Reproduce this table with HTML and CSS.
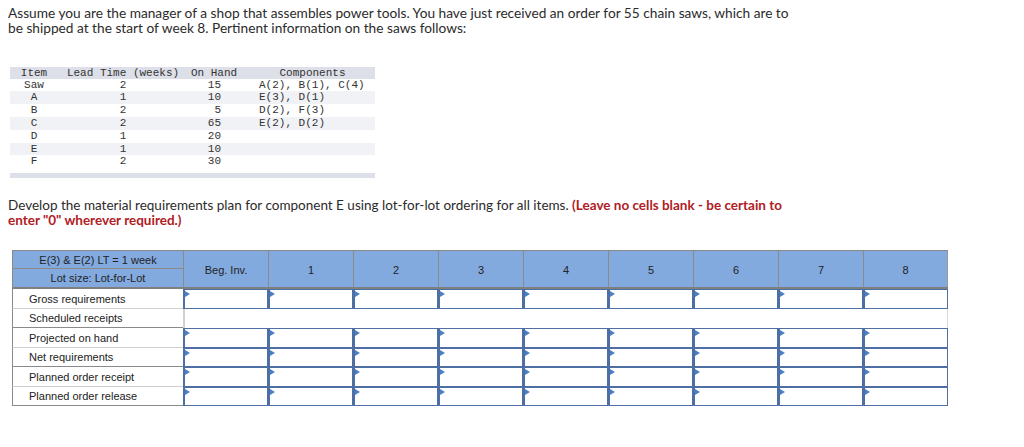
FILE: index.html
```html
<!DOCTYPE html>
<html>
<head>
<meta charset="utf-8">
<link rel="stylesheet" href="styles.css">
</head>
<body>
<p class="intro">Assume you are the manager of a shop that assembles power tools. You have just received an order for 55 chain saws, which are to be shipped at the start of week 8. Pertinent information on the saws follows:</p>

<table class="data">
  <thead>
    <tr><th class="c-item">Item</th><th class="c-lead">Lead Time (weeks)</th><th class="c-hand">On Hand</th><th class="c-comp">Components</th></tr>
  </thead>
  <tbody>
    <tr class="first"><td class="c-item">Saw</td><td class="c-lead">2</td><td class="c-hand">15</td><td class="c-comp">A(2), B(1), C(4)</td></tr>
    <tr class="alt"><td class="c-item">A</td><td class="c-lead">1</td><td class="c-hand">10</td><td class="c-comp">E(3), D(1)</td></tr>
    <tr><td class="c-item">B</td><td class="c-lead">2</td><td class="c-hand">5</td><td class="c-comp">D(2), F(3)</td></tr>
    <tr class="alt"><td class="c-item">C</td><td class="c-lead">2</td><td class="c-hand">65</td><td class="c-comp">E(2), D(2)</td></tr>
    <tr><td class="c-item">D</td><td class="c-lead">1</td><td class="c-hand">20</td><td class="c-comp"></td></tr>
    <tr class="alt"><td class="c-item">E</td><td class="c-lead">1</td><td class="c-hand">10</td><td class="c-comp"></td></tr>
    <tr><td class="c-item">F</td><td class="c-lead">2</td><td class="c-hand">30</td><td class="c-comp"></td></tr>
    <tr class="spacer"><td colspan="4"></td></tr>
    <tr class="bar"><td colspan="4"></td></tr>
  </tbody>
</table>

<p class="task">Develop the material requirements plan for component E using lot-for-lot ordering for all items. <strong class="warn">(Leave no cells blank - be certain to enter "0" wherever required.)</strong></p>

<div class="mrp">
  <div class="hdr">
    <div class="hdr-left">
      <div class="hl-top">E(3) &amp; E(2) LT = 1 week</div>
      <div class="hl-bot">Lot size: Lot-for-Lot</div>
    </div>
    <div class="hc">Beg. Inv.</div>
    <div class="hc">1</div>
    <div class="hc">2</div>
    <div class="hc">3</div>
    <div class="hc">4</div>
    <div class="hc">5</div>
    <div class="hc">6</div>
    <div class="hc">7</div>
    <div class="hc last">8</div>
  </div>

  <div class="row">
    <div class="lbl light">Gross requirements</div>
    <div class="in"></div><div class="in"></div><div class="in"></div><div class="in"></div><div class="in"></div><div class="in"></div><div class="in"></div><div class="in"></div><div class="in"></div>
  </div>
  <div class="row">
    <div class="lbl">Scheduled receipts</div>
    <div class="blank"></div>
  </div>
  <div class="row">
    <div class="lbl light">Projected on hand</div>
    <div class="in"></div><div class="in"></div><div class="in"></div><div class="in"></div><div class="in"></div><div class="in"></div><div class="in"></div><div class="in"></div><div class="in"></div>
  </div>
  <div class="row">
    <div class="lbl">Net requirements</div>
    <div class="in"></div><div class="in"></div><div class="in"></div><div class="in"></div><div class="in"></div><div class="in"></div><div class="in"></div><div class="in"></div><div class="in"></div>
  </div>
  <div class="row">
    <div class="lbl light">Planned order receipt</div>
    <div class="in"></div><div class="in"></div><div class="in"></div><div class="in"></div><div class="in"></div><div class="in"></div><div class="in"></div><div class="in"></div><div class="in"></div>
  </div>
  <div class="row">
    <div class="lbl">Planned order release</div>
    <div class="in"></div><div class="in"></div><div class="in"></div><div class="in"></div><div class="in"></div><div class="in"></div><div class="in"></div><div class="in"></div><div class="in"></div>
  </div>
</div>
</body>
</html>
```

FILE: styles.css
```css
* { box-sizing: border-box; }

body {
  margin: 0;
  padding: 5px 8px 0 8px;
  background: #fff;
  color: #222;
  font-family: "Lato", "Open Sans", sans-serif;
}

.intro {
  margin: 0;
  width: 795px;
  font-size: 13.7px;
  line-height: 15px;
  color: #2b2b2b;
}

.data {
  margin: 32px 0 0 2px;
  border-collapse: collapse;
  font-family: "Liberation Mono", "DejaVu Sans Mono", monospace;
  font-size: 11px;
  color: #333;
  width: 365px;
}

.data th, .data td {
  padding: 0;
  font-weight: normal;
  line-height: 11px;
  white-space: pre;
}

.data thead tr { height: 12px; }
.data thead th { background: #dde0e8; }
.data tbody tr { height: 12.9px; }
.data tbody tr.first { height: 12px; }
.data tr.alt td { background: #f1f2f5; }
.data tbody tr.spacer { height: 5px; }
.data tbody tr.bar { height: 5px; }
.data tr.spacer td { height: 5px; line-height: 0; font-size: 0; }
.data tr.bar td { height: 5px; line-height: 0; font-size: 0; background: #dde0e8; }

.c-item { width: 48px; text-align: center; }
.c-lead { width: 130px; text-align: center; }
.data th.c-lead { text-align: center; }
.c-hand { width: 62px; text-align: right; padding-right: 29px !important; }
.data th.c-hand { text-align: center; padding-right: 10px !important; }
.c-comp { text-align: left; padding-left: 9px !important; }
.data th.c-comp { text-align: center; padding-left: 0 !important; }

.task {
  margin: 20px 0 0 0;
  width: 792px;
  font-size: 13.5px;
  line-height: 15px;
  color: #2b2b2b;
}

.warn {
  color: #b0201f;
  font-weight: bold;
}

.mrp {
  margin: 22px 0 0 4px;
  width: 936px;
  font-family: "Liberation Sans", Arial, sans-serif;
  font-size: 11px;
  color: #222;
}

.hdr {
  display: flex;
  height: 39px;
  background: #82aadf;
  border-top: 1px solid #8a8a8a;
  border-bottom: 2px solid #7f7f7f;
  border-left: 1px solid #8a8a8a;
}

.hdr-left {
  width: 170px;
  display: flex;
  flex-direction: column;
}

.hl-top {
  height: 18px;
  line-height: 18px;
  text-align: center;
  border-bottom: 1px solid #8a8a8a;
}

.hl-bot {
  flex: 1;
  line-height: 19px;
  text-align: center;
}

.hc {
  width: 85px;
  border-left: 1px solid #8a8a8a;
  display: flex;
  align-items: center;
  justify-content: center;
  padding-top: 2px;
}

.hc.last { border-right: 1px solid #9a9a9a; }

.row {
  display: flex;
  height: 19.5px;
}

.lbl {
  width: 171px;
  border-left: 1px solid #8a8a8a;
  border-bottom: 1px solid #8a8a8a;
  padding-left: 16px;
  display: flex;
  align-items: center;
  background: #fff;
}

.lbl.light { border-bottom-color: #cfcfcf; }

.in {
  position: relative;
  width: 85px;
  background: #fff;
  border: 1px solid #4e6fa4;
  border-left-width: 2px;
  border-top-width: 1px;
}

.in::before {
  content: "";
  position: absolute;
  top: 1px;
  left: 0;
  border-left: 5px solid #4b7fc6;
  border-top: 3px solid transparent;
  border-bottom: 3px solid transparent;
}

.blank {
  flex: 1;
  border-left: 2px solid #d2d2d2;
  border-right: 1px solid #d8d8d8;
  background: #fff;
}
```
